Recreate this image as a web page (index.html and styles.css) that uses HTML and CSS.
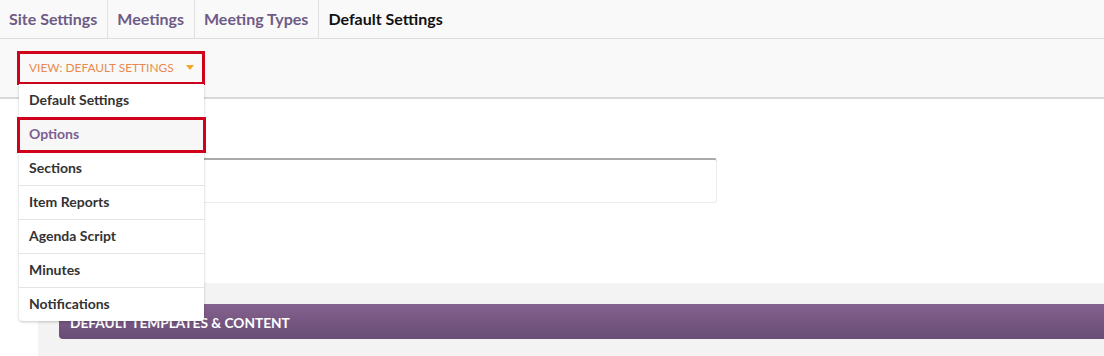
FILE: index.html
```html
<!DOCTYPE html>
<html>
<head>
<meta charset="utf-8">
<link rel="stylesheet" href="styles.css">
</head>
<body>
<nav class="tabs">
  <a class="tab">Site Settings</a>
  <a class="tab">Meetings</a>
  <a class="tab">Meeting Types</a>
  <a class="tab active">Default Settings</a>
</nav>
<div class="toolbar">
  <div class="view-wrap">
    <div class="view-btn">VIEW: DEFAULT SETTINGS <span class="caret"></span></div>
    <ul class="menu">
      <li>Default Settings</li>
      <li class="selected">Options</li>
      <li>Sections</li>
      <li>Item Reports</li>
      <li>Agenda Script</li>
      <li>Minutes</li>
      <li class="last">Notifications</li>
    </ul>
  </div>
</div>
<main class="content">
  <div class="field"></div>
</main>
<section class="panel">
  <div class="panel-head">DEFAULT TEMPLATES &amp; CONTENT</div>
</section>
</body>
</html>
```

FILE: styles.css
```css
html, body {
  margin: 0;
  padding: 0;
  background: #ffffff;
  font-family: Lato, "Open Sans", sans-serif;
  overflow: hidden;
  height: 356px;
}
.tabs {
  display: flex;
  height: 38px;
  background: #f9f9f9;
  border-bottom: 1px solid #dcdcdc;
}
.tab {
  display: block;
  padding: 0 10px 0 9px;
  line-height: 37px;
  font-size: 16px;
  font-weight: 700;
  color: #6e5b86;
  border-right: 1px solid #e1e1e1;
}
.tab.active {
  color: #111;
  border-right: none;
}
.toolbar {
  background: #f9f9f9;
  border-bottom: 2px solid #d8d8d8;
  padding: 12px 0 0 17px;
  box-sizing: border-box;
  height: 60px;
}
.view-wrap {
  position: relative;
  display: inline-block;
}
.view-btn {
  box-sizing: border-box;
  width: 188px;
  height: 34px;
  border: 3px solid #d0021b;
  padding: 0 0 0 9px;
  line-height: 28px;
  font-size: 11.9px;
  color: #e8894d;
  background: #f9f9f9;
}
.caret {
  display: inline-block;
  margin-left: 9px;
  width: 0;
  height: 0;
  border-left: 4px solid transparent;
  border-right: 4px solid transparent;
  border-top: 5px solid #f5a623;
  vertical-align: middle;
  position: relative;
  top: -1px;
}
.menu {
  position: absolute;
  top: 33px;
  left: 2px;
  width: 185px;
  margin: 0;
  padding: 0;
  list-style: none;
  background: #fff;
  border-radius: 0 0 4px 4px;
  box-shadow: 0 1px 3px rgba(0,0,0,0.22);
  z-index: 10;
}
.menu li {
  box-sizing: border-box;
  height: 34px;
  line-height: 32px;
  padding-left: 10px;
  font-size: 14px;
  font-weight: 700;
  color: #333;
  border-bottom: 1px solid #e4e4e4;
}
.menu li.last {
  border-bottom: none;
  height: 33px;
}
.menu li.selected {
  background: #f7f7f7;
  color: #7d5f91;
  outline: 3px solid #d0021b;
  outline-offset: -2px;
  position: relative;
  width: 187px;
  margin-left: -1px;
  padding-left: 11px;
}
.content {
  height: 184px;
  padding: 59px 0 0 59px;
  box-sizing: border-box;
}
.field {
  width: 658px;
  height: 45px;
  box-sizing: border-box;
  border: 1px solid #ececec;
  border-top: 2px solid #a9a9a9;
  border-radius: 3px;
  background: #fff;
}
.panel {
  margin-left: 38px;
  background: #f3f3f3;
  padding: 21px 0 20px 21px;
  height: 80px;
  box-sizing: border-box;
}
.panel-head {
  height: 35px;
  line-height: 37px;
  padding-left: 11px;
  background: linear-gradient(#85628f, #684c75);
  border-radius: 4px 0 0 4px;
  color: #fff;
  font-size: 13.7px;
  font-weight: 700;
}
```
